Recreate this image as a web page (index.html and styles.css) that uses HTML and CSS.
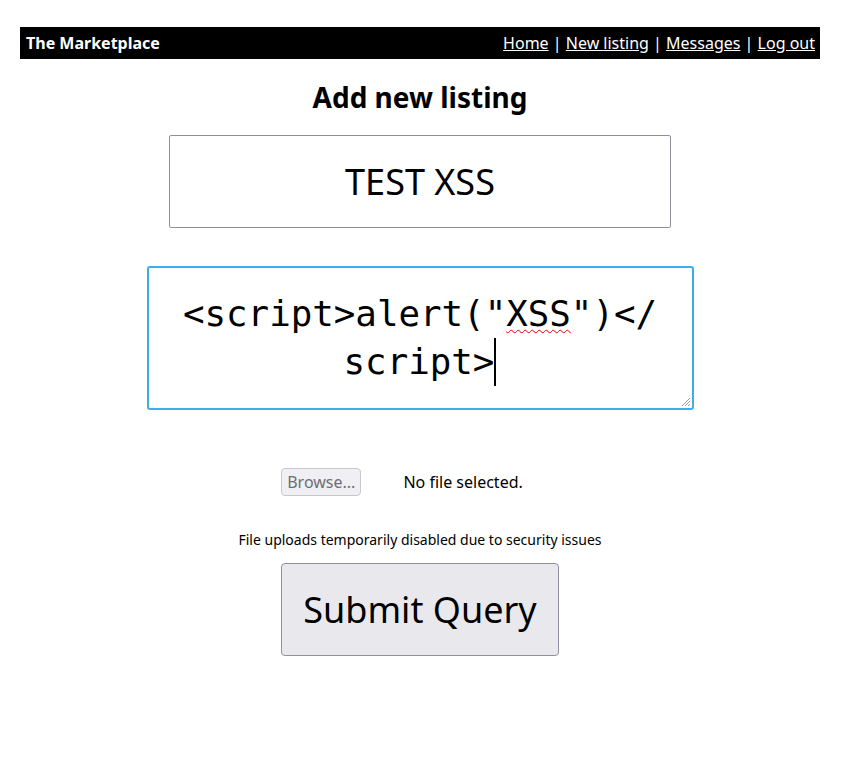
FILE: index.html
```html
<!DOCTYPE html>
<html>
<head>
<meta charset="utf-8">
<title>The Marketplace</title>
<link rel="stylesheet" href="styles.css">
</head>
<body>
<div class="page">
  <div class="topbar">
    <span class="brand">The Marketplace</span>
    <nav class="nav">
      <a href="#">Home</a> | <a href="#">New listing</a> | <a href="#">Messages</a> | <a href="#">Log out</a>
    </nav>
  </div>
  <h2 class="title">Add new listing</h2>
  <form class="form">
    <div class="field-title">TEST XSS</div>
    <div class="field-desc" role="textbox">&lt;script&gt;alert("<span class="spell">XSS</span>")&lt;/script&gt;<span class="caret"></span><svg class="grip" width="10" height="10" viewBox="0 0 10 10"><path d="M9 1L1 9M9 4L4 9M9 7L7 9" stroke="#9a9a9a" stroke-width="1"/></svg></div>
    <div class="file-row">
      <span class="browse">Browse...</span>
      <span class="nofile">No file selected.</span>
    </div>
    <p class="note">File uploads temporarily disabled due to security issues</p>
    <button type="button" class="submit">Submit Query</button>
  </form>
</div>
</body>
</html>
```
FILE: styles.css
```css
html, body {
  margin: 0;
  padding: 0;
  background: #ffffff;
}
body {
  font-family: "Noto Sans", "Open Sans", sans-serif;
  color: #000;
}
.page {
  width: 800px;
  margin-left: 20px;
  padding-top: 27px;
}
.topbar {
  background: #000;
  color: #fff;
  height: 32px;
  display: flex;
  justify-content: space-between;
  align-items: center;
  padding: 0 5px 0 6px;
  font-size: 16px;
}
.brand {
  font-weight: bold;
}
.nav a {
  color: #fff;
  text-decoration: underline;
}
.title {
  text-align: center;
  font-size: 28px;
  font-weight: bold;
  margin: 19px 0 19px;
  line-height: 38px;
}
.form {
  display: flex;
  flex-direction: column;
  align-items: center;
}
.field-title {
  box-sizing: border-box;
  width: 502px;
  height: 93px;
  border: 1px solid #8f8f9d;
  border-radius: 2px;
  display: flex;
  align-items: center;
  justify-content: center;
  font-size: 36px;
}
.field-desc {
  position: relative;
  box-sizing: border-box;
  width: 547px;
  height: 144px;
  margin-top: 38px;
  border: 2px solid #3daee9;
  border-radius: 3px;
  padding: 22px 30px;
  font-family: "DejaVu Sans Mono", monospace;
  font-size: 35.8px;
  line-height: 48px;
  text-align: center;
  word-break: break-all;
}
.spell {
  text-decoration: underline wavy #e00000;
  text-decoration-thickness: 1px;
  text-underline-offset: 3px;
}
.caret {
  display: inline-block;
  width: 2px;
  height: 48px;
  background: #000;
  vertical-align: top;
}
.grip {
  position: absolute;
  right: 1px;
  bottom: 1px;
}
.file-row {
  display: flex;
  align-items: center;
  gap: 42px;
  margin-top: 58px;
  padding-right: 36px;
  font-size: 16px;
}
.browse {
  box-sizing: border-box;
  height: 28px;
  padding: 0 5px;
  display: flex;
  align-items: center;
  border: 1px solid #c8c8cf;
  border-radius: 4px;
  background: #f0f0f4;
  color: #6d6d75;
}
.nofile {
  color: #000;
}
.note {
  font-size: 14px;
  margin: 34px 0 14px;
}
.submit {
  box-sizing: border-box;
  width: 278px;
  height: 93px;
  border: 1px solid #8f8f9d;
  border-radius: 4px;
  background: #e9e9ed;
  font-family: "Noto Sans", "Open Sans", sans-serif;
  font-size: 36px;
  color: #000;
  padding: 0;
}
```
